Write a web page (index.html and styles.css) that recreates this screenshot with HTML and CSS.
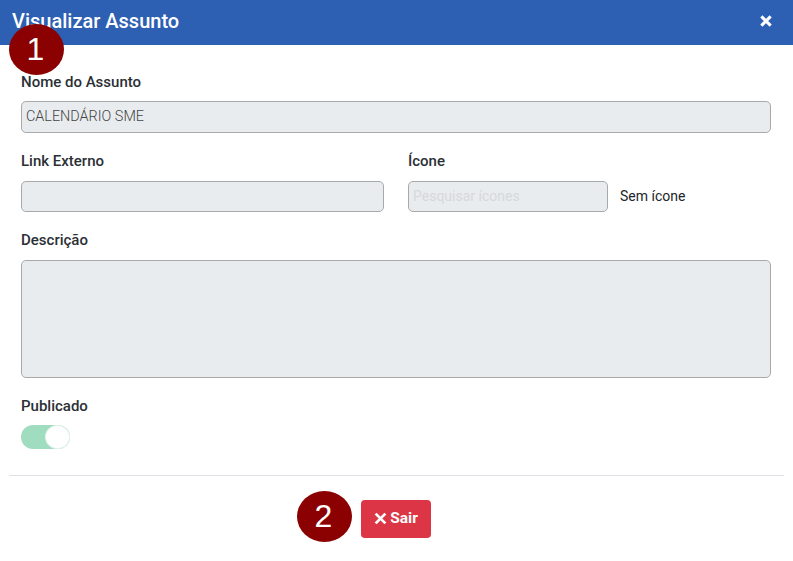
FILE: index.html
```html
<!DOCTYPE html>
<html lang="pt">
<head>
<meta charset="utf-8">
<title>Visualizar Assunto</title>
<link rel="stylesheet" href="styles.css">
</head>
<body>
<div class="modal">
  <header class="modal-header">
    <h1 class="modal-title">Visualizar Assunto</h1>
    <svg class="close-icon" viewBox="0 0 12 12" aria-label="Fechar"><path d="M2 2 L10 10 M10 2 L2 10"/></svg>
  </header>
  <main class="modal-body">
    <div class="field">
      <label class="label">Nome do Assunto</label>
      <div class="input input-name">CALENDÁRIO SME</div>
    </div>
    <div class="row">
      <div class="field col-link">
        <label class="label">Link Externo</label>
        <div class="input input-short"></div>
      </div>
      <div class="field col-icon">
        <label class="label">Ícone</label>
        <div class="icon-row">
          <div class="input input-short input-search">Pesquisar ícones</div>
          <span class="no-icon">Sem ícone</span>
        </div>
      </div>
    </div>
    <div class="field field-desc">
      <label class="label">Descrição</label>
      <div class="input textarea"></div>
    </div>
    <div class="field-switch">
      <label class="label">Publicado</label>
      <div class="switch"><span class="knob"></span></div>
    </div>
  </main>
  <footer class="modal-footer">
    <button class="btn-exit" type="button">
      <svg class="btn-icon" viewBox="0 0 12 12"><path d="M1.5 1.5 L10.5 10.5 M10.5 1.5 L1.5 10.5"/></svg>Sair
    </button>
  </footer>
  <span class="marker marker-1">1</span>
  <span class="marker marker-2">2</span>
</div>
</body>
</html>
```

FILE: styles.css
```css
* { box-sizing: border-box; }
html, body { margin: 0; padding: 0; }
body {
  width: 793px;
  height: 561px;
  background: #fff;
  font-family: Roboto, "Liberation Sans", sans-serif;
  color: #212529;
  overflow: hidden;
}
.modal { position: relative; height: 561px; }
.modal-header {
  height: 45px;
  background: #2d5fb3;
  display: flex;
  align-items: center;
  justify-content: space-between;
  padding: 0 20px 3px 12px;
}
.modal-title {
  margin: 0;
  font-size: 20px;
  font-weight: 500;
  line-height: 24px;
  color: #fff;
}
.close-icon { width: 14px; height: 14px; }
.close-icon path { stroke: #fff; stroke-width: 2.6; fill: none; }
.modal-body { padding: 27px 22px 0 21px; }
.field { display: flex; flex-direction: column; }
.label {
  font-size: 15px;
  font-weight: 500;
  line-height: 20px;
  color: #2b3035;
  margin-bottom: 9px;
}
.input {
  height: 32px;
  background: #e9ecef;
  border: 1px solid #a9a9a9;
  border-radius: 5px;
  font-size: 14px;
  font-weight: 300;
  line-height: 28px;
  padding: 0 4px;
  color: #444;
}
.input-name { font-size: 14.4px; line-height: 30px; }
.input-short { height: 31px; margin-top: 1px; }
.row { display: flex; margin-top: 18px; }
.col-link { width: 363px; }
.col-icon { margin-left: 24px; flex: 1; }
.icon-row { display: flex; align-items: center; }
.input-search { width: 200px; color: #d5d8dc; font-weight: 400; }
.no-icon { margin-left: 12px; font-size: 14px; font-weight: 400; color: #212529; }
.field-desc { margin-top: 18px; }
.field-desc .label { margin-bottom: 10px; }
.textarea { height: 118px; }
.field-switch { margin-top: 18px; display: flex; flex-direction: column; }
.field-switch .label { margin-bottom: 0; }
.switch {
  position: relative;
  width: 49px;
  height: 24px;
  margin-top: 9px;
  border-radius: 12px;
  background: #9fdcc0;
}
.knob {
  position: absolute;
  right: 0;
  top: 0;
  width: 25px;
  height: 24px;
  border-radius: 50%;
  background: #fff;
  border: 1px solid #e3f3ec;
}
.modal-footer {
  margin: 26px 9px 0;
  border-top: 1px solid #dee2e6;
  padding: 24px 0 0 352px;
  display: flex;
}
.btn-exit {
  width: 70px;
  height: 38px;
  display: flex;
  align-items: center;
  justify-content: center;
  gap: 3px;
  padding: 0 0 2px;
  background: #dc3545;
  border: none;
  border-radius: 4px;
  color: #fff;
  font-family: inherit;
  font-size: 15.5px;
  font-weight: 700;
}
.btn-icon { width: 13px; height: 13px; margin-top: 1px; }
.btn-icon path { stroke: #fff; stroke-width: 2.6; fill: none; }
.marker {
  position: absolute;
  width: 55px;
  height: 51px;
  padding-right: 2px;
  border-radius: 50%;
  background: #8b0000;
  color: #fff;
  font-family: "Liberation Sans", Arial, sans-serif;
  font-size: 32px;
  line-height: 50px;
  text-align: center;
}
.marker-1 { left: 9px; top: 24px; }
.marker-2 { left: 297px; top: 491px; }
```
